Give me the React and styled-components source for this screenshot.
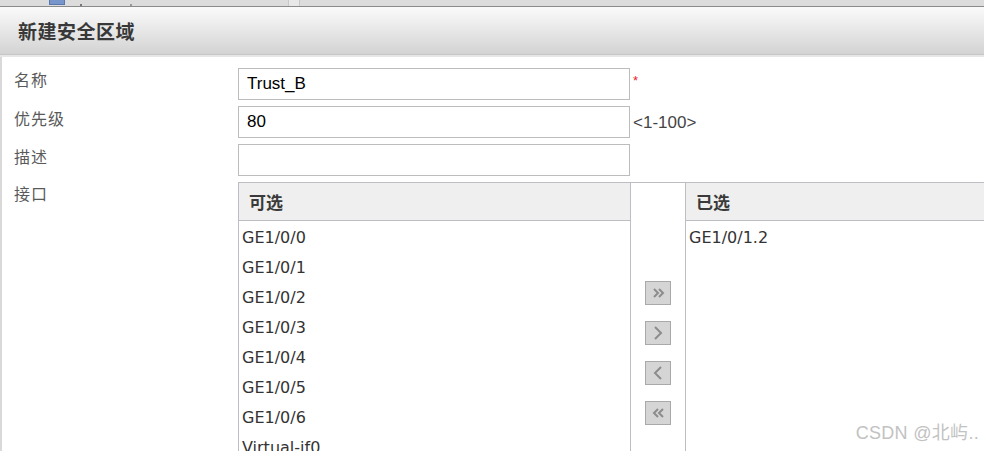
import styled, { createGlobalStyle } from 'styled-components'

const GlobalStyle = createGlobalStyle`
  html, body { margin:0; padding:0; background:#fff; }
  body { width:984px; height:451px; overflow:hidden; font-family:'Liberation Sans', Arial, sans-serif; }
`

const CJK = `'Noto Sans CJK SC', 'DejaVu Sans', sans-serif`

const available = ['GE1/0/0', 'GE1/0/1', 'GE1/0/2', 'GE1/0/3', 'GE1/0/4', 'GE1/0/5', 'GE1/0/6', 'Virtual-if0']
const chosen = ['GE1/0/1.2']

const Page = styled.div`
  position:relative; width:984px; height:451px; overflow:hidden; background:#fff;
`
const TopStrip = styled.div`
  height:6px; background:#dcdcdc; border-bottom:1px solid #8a8a8a;
  display:flex; align-items:flex-start;
`
const TreeIcon = styled.span`
  margin-left:49px; width:16px; height:5px; background:#7896cc;
  border:1px solid #5a78b0; border-top:none; box-sizing:border-box;
`
const TreeText = styled.span`
  margin-left:15px; margin-top:4px; width:48px; height:2px;
  border-left:2px solid #777; border-right:2px solid #999;
`
const StripDivider = styled.span`
  margin-left:auto; margin-right:684px; width:10px; height:6px;
  background:#e8e8e8; border-left:1px solid #c8c8c8; border-right:1px solid #c8c8c8;
`
const Header = styled.div`
  height:47px; display:flex; align-items:center; padding-left:18px;
  background:linear-gradient(#fafafa 0%, #efefef 30%, #d3d3d3 100%);
  border-bottom:1px solid #c6c6c6;
`
const Title = styled.h1`
  margin:0; font-family:${CJK}; font-size:19px; font-weight:700;
  color:#383838; letter-spacing:0.5px;
`
const HeaderShadow = styled.div`height:2px; background:#e6e6e6;`

const Body = styled.div`
  border-left:2px solid #d9d9d9; padding-top:11px;
  display:grid; grid-template-columns:236px 1fr; row-gap:6px;
`
const Label = styled.div`
  font-family:${CJK}; font-size:16px; color:#5a5a5a; letter-spacing:1px;
  padding-left:12px; line-height:20px; padding-top:${p => p.$top || 1}px;
`
const FieldRow = styled.div`display:flex; align-items:center;`
const Input = styled.div`
  width:392px; height:32px; box-sizing:border-box; border:1px solid #bcbcbc;
  padding-left:8px; display:flex; align-items:center;
  font-size:17px; color:#000;
`
const Required = styled.span`
  color:#e8202a; font-size:13px; margin-left:3px; align-self:flex-start; margin-top:5px;
`
const Hint = styled.span`
  color:#444; font-size:17px; margin-left:3px; margin-top:2px;
`

const Transfer = styled.div`
  display:flex; height:300px; border-top:1px solid #bdbdc4; border-left:1px solid #bdbdc4;
`
const Panel = styled.div`
  width:${p => p.$w}px; flex-shrink:0; border-right:1px solid #bdbdc4;
`
const PanelHead = styled.div`
  height:37px; background:#efefef; border-bottom:1px solid #bdbdc4;
  display:flex; align-items:center; padding-left:10px;
  font-family:${CJK}; font-size:17px; font-weight:700; color:#3a3a3a;
`
const List = styled.ul`
  list-style:none; margin:0; padding:2px 0 0 3px;
`
const Item = styled.li`
  height:30px; line-height:30px; font-family:'DejaVu Sans', Tahoma, sans-serif;
  font-size:16px; color:#333; white-space:nowrap;
`
const Mover = styled.div`
  width:54px; flex-shrink:0; border-right:1px solid #bdbdc4;
  display:flex; flex-direction:column; align-items:center; gap:16px; padding-top:98px;
`
const MoveBtn = styled.button`
  width:26px; height:24px; box-sizing:border-box; padding:0;
  background:#d5d5d5; border:1px solid #a9a9a9;
  display:flex; align-items:center; justify-content:center; cursor:pointer;
`
const Watermark = styled.div`
  position:absolute; right:5px; bottom:7px; font-family:'Liberation Sans', ${CJK};
  font-size:18px; color:#c2c2c2; letter-spacing:0.3px;
`

const Chevron = ({ dir, double }) => {
  const stroke = '#8c8c8c'
  if (double) {
    const d = dir === 'right'
      ? ['M3 3 L7 7 L3 11', 'M8 3 L12 7 L8 11']
      : ['M7 3 L3 7 L7 11', 'M12 3 L8 7 L12 11']
    return (
      <svg width="15" height="14" viewBox="0 0 15 14">
        {d.map(p => <path key={p} d={p} fill="none" stroke={stroke} strokeWidth="2" />)}
      </svg>
    )
  }
  return (
    <svg width="10" height="16" viewBox="0 0 10 16">
      <path d={dir === 'right' ? 'M2 2 L8 8 L2 14' : 'M8 2 L2 8 L8 14'} fill="none" stroke={stroke} strokeWidth="2" />
    </svg>
  )
}

const App = () => (
  <Page>
    <GlobalStyle />
    <TopStrip>
      <TreeIcon />
      <TreeText />
      <StripDivider />
    </TopStrip>
    <Header><Title>新建安全区域</Title></Header>
    <HeaderShadow />
    <Body>
      <Label>名称</Label>
      <FieldRow>
        <Input>Trust_B</Input>
        <Required>*</Required>
      </FieldRow>

      <Label $top={2}>优先级</Label>
      <FieldRow>
        <Input>80</Input>
        <Hint>&lt;1-100&gt;</Hint>
      </FieldRow>

      <Label $top={2}>描述</Label>
      <FieldRow>
        <Input />
      </FieldRow>

      <Label $top={1}>接口</Label>
      <Transfer>
        <Panel $w={391}>
          <PanelHead>可选</PanelHead>
          <List>
            {available.map(name => <Item key={name}>{name}</Item>)}
          </List>
        </Panel>
        <Mover>
          <MoveBtn><Chevron dir="right" double /></MoveBtn>
          <MoveBtn><Chevron dir="right" /></MoveBtn>
          <MoveBtn><Chevron dir="left" /></MoveBtn>
          <MoveBtn><Chevron dir="left" double /></MoveBtn>
        </Mover>
        <Panel $w={400}>
          <PanelHead>已选</PanelHead>
          <List>
            {chosen.map(name => <Item key={name}>{name}</Item>)}
          </List>
        </Panel>
      </Transfer>
    </Body>
    <Watermark>CSDN @北屿..</Watermark>
  </Page>
)

export default App
